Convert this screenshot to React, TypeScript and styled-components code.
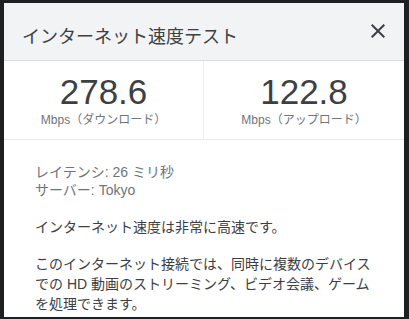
import React from "react";
import styled, { createGlobalStyle } from "styled-components";

const Global = createGlobalStyle`
  html, body { margin: 0; padding: 0; background: #1e1f20; }
  body { font-family: "Liberation Sans", "Noto Sans CJK JP", sans-serif; }
  * { box-sizing: border-box; }
`;

const Frame = styled.div`
  width: 409px;
  height: 319px;
  background: #1e1f20;
  padding: 3px 5px 2px 4px;
`;

const Dialog = styled.div`
  width: 100%;
  height: 100%;
  background: #ffffff;
  display: flex;
  flex-direction: column;
  overflow: hidden;
`;

const Header = styled.div`
  height: 58px;
  flex: none;
  background: #f1f3f4;
  border-bottom: 1px solid #dadce0;
  display: flex;
  align-items: flex-start;
  justify-content: space-between;
  padding: 0 14px 0 18px;
`;

const Title = styled.div`
  margin-top: 20px;
  font-size: 18px;
  line-height: 24px;
  color: #3c4043;
  font-family: "Noto Sans CJK JP", sans-serif;
`;

const CloseButton = styled.button`
  margin-top: 16px;
  width: 24px;
  height: 24px;
  padding: 0;
  border: 0;
  background: transparent;
  color: #3c4043;
  display: flex;
  align-items: center;
  justify-content: center;
  cursor: pointer;
`;

const Stats = styled.div`
  height: 79px;
  flex: none;
  display: grid;
  grid-template-columns: 200px 1fr;
  border-bottom: 1px solid #e8eaed;
`;

const StatCell = styled.div<{ $divider?: boolean }>`
  display: flex;
  flex-direction: column;
  align-items: center;
  padding-top: 13px;
  border-right: ${(p) => (p.$divider ? "1px solid #ebedef" : "none")};
`;

const StatValue = styled.div`
  font-size: 35px;
  line-height: 35px;
  color: #3c4043;
`;

const StatLabel = styled.div`
  margin-top: 3px;
  font-size: 12px;
  line-height: 16px;
  color: #70757a;
`;

const Body = styled.div`
  padding: 23px 31px 0 31px;
`;

const Info = styled.div`
  font-size: 14px;
  line-height: 18px;
  color: #70757a;
`;

const Paragraph = styled.p<{ $gap: number }>`
  margin: ${(p) => p.$gap}px 0 0 0;
  font-size: 14px;
  line-height: 20px;
  color: #3c4043;
`;

const CloseIcon = () => (
  <svg width="24" height="24" viewBox="0 0 24 24" fill="currentColor">
    <path d="M19 6.41L17.59 5 12 10.59 6.41 5 5 6.41 10.59 12 5 17.59 6.41 19 12 13.41 17.59 19 19 17.59 13.41 12z" />
  </svg>
);

export default function App() {
  return (
    <>
      <Global />
      <Frame>
        <Dialog>
          <Header>
            <Title>インターネット速度テスト</Title>
            <CloseButton aria-label="閉じる">
              <CloseIcon />
            </CloseButton>
          </Header>
          <Stats>
            <StatCell $divider>
              <StatValue>278.6</StatValue>
              <StatLabel>Mbps（ダウンロード）</StatLabel>
            </StatCell>
            <StatCell>
              <StatValue>122.8</StatValue>
              <StatLabel>Mbps（アップロード）</StatLabel>
            </StatCell>
          </Stats>
          <Body>
            <Info>
              <div>レイテンシ: 26 ミリ秒</div>
              <div>サーバー: Tokyo</div>
            </Info>
            <Paragraph $gap={18}>インターネット速度は非常に高速です。</Paragraph>
            <Paragraph $gap={17}>
              このインターネット接続では、同時に複数のデバイスでの HD 動画のストリーミング、ビデオ会議、ゲームを処理できます。
            </Paragraph>
          </Body>
        </Dialog>
      </Frame>
    </>
  );
}
